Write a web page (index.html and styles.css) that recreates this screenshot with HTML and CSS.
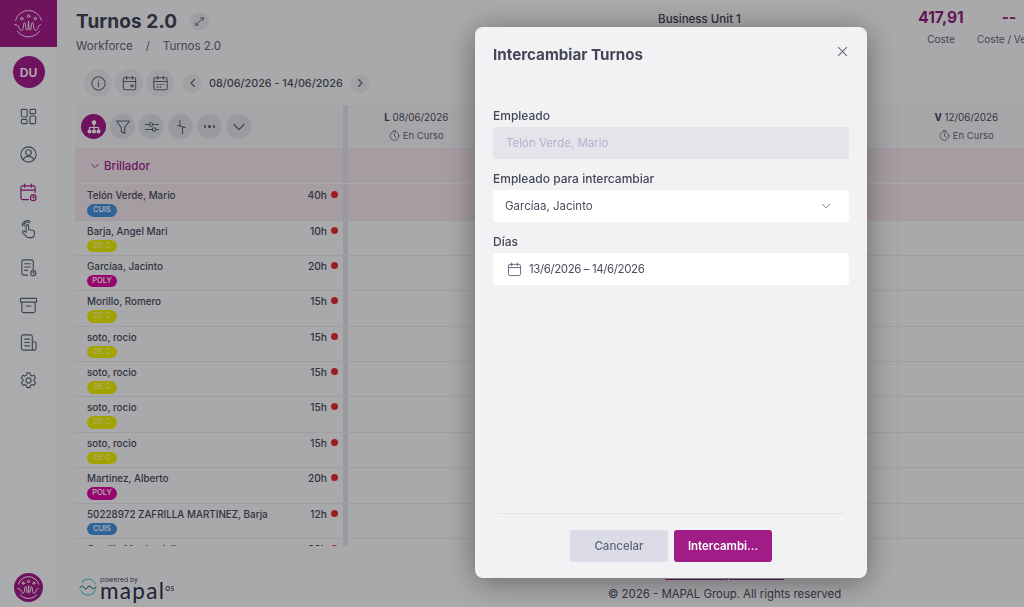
FILE: index.html
```html
<!DOCTYPE html>
<html lang="es">
<head>
<meta charset="utf-8">
<title>Turnos 2.0</title>
<link rel="stylesheet" href="styles.css">
</head>
<body>
<div class="app">
  <aside class="sidebar">
    <div class="brand">
      <svg class="brand-logo" viewBox="0 0 30 30"><path d="M1.600 11.500A14 14 0 0 1 28.400 11.500M3.500 23A14 14 0 0 0 26.500 23"/><path d="M.8 16c2.700 0 3.700 1.500 4.700 4 1 2.600 3 3 3.800.5.7-2.300.4-6.500 1.700-6.500 1.300 0 .8 8 2.500 8s1.200-9.500 1.500-9.500.2 9.500 1.500 9.500c1.700 0 1.200-8 2.500-8 1.300 0 1 4.200 1.700 6.500.8 2.500 2.800 2.100 3.800-.5 1-2.500 2-4 2.800-4"/><circle cx="15" cy="7.500" r="1.300"/><circle cx="8" cy="10" r="1.300"/><circle cx="22" cy="10" r="1.300"/></svg>
    </div>
    <div class="avatar">DU</div>
    <nav class="side-nav">
      <a class="side-item"><svg viewBox="0 0 20 20"><rect x="2.500" y="2.500" width="6" height="8" rx="1"/><rect x="11.500" y="2.500" width="6" height="4.500" rx="1"/><rect x="2.500" y="13" width="6" height="4.500" rx="1"/><rect x="11.500" y="9.500" width="6" height="8" rx="1"/></svg></a>
      <a class="side-item"><svg viewBox="0 0 20 20"><circle cx="10" cy="10" r="8"/><circle cx="10" cy="8" r="3"/><path d="M4.500 15.500c1-2.500 3-3.500 5.500-3.500s4.500 1 5.500 3.500"/></svg></a>
      <a class="side-item side-item-active"><svg viewBox="0 0 20 20"><path d="M10 17.500H4a2 2 0 0 1-2-2V5a2 2 0 0 1 2-2h11a2 2 0 0 1 2 2v5M2 7.500h15M6 1v3.500M13 1v3.500"/><circle cx="15" cy="15.500" r="3"/><path d="M15 14v1.500h1.200"/></svg></a>
      <a class="side-item"><svg viewBox="0 0 20 20"><path d="M7.500 12V6.200a1.300 1.300 0 0 1 2.600 0V10l4.700 1a2 2 0 0 1 1.500 2.200l-.4 3a2.500 2.500 0 0 1-2.500 2.300H10a3 3 0 0 1-2.400-1.200L4 13.500c-1-1.500.8-2.800 2-1.700l1.500 1.200M5.500 6.500a3.300 3.300 0 0 1 5.500-3.300M3.500 6a5.300 5.300 0 0 1 8.500-4.300"/></svg></a>
      <a class="side-item"><svg viewBox="0 0 20 20"><path d="M9 18H5a2 2 0 0 1-2-2V4a2 2 0 0 1 2-2h8a2 2 0 0 1 2 2v8M6 6h6M6 9.500h6M6 13h3"/><circle cx="15" cy="16" r="2.700"/><path d="M15 14.800V16h1"/></svg></a>
      <a class="side-item"><svg viewBox="0 0 20 20"><rect x="1.500" y="2.500" width="17" height="4" rx=".8"/><path d="M3 6.500v9a2 2 0 0 0 2 2h10a2 2 0 0 0 2-2v-9M7.500 10.500h5"/></svg></a>
      <a class="side-item"><svg viewBox="0 0 20 20"><path d="M14 9.500V4a2 2 0 0 0-2-2H4.500a2 2 0 0 0-2 2v12a2 2 0 0 0 2 2h11.500M6 6.500h5M6 10h5M6 13.500h5M14 9.500h2.500a1.500 1.500 0 0 1 1.500 1.500v5a2 2 0 0 1-4 0z"/></svg></a>
      <a class="side-item"><svg viewBox="0 0 20 20"><circle cx="10" cy="10" r="2.700"/><path d="M8.400 2h3.200l.5 2.300 1.600.9 2.200-.7 1.600 2.800-1.700 1.500v1.900l1.700 1.500-1.600 2.800-2.200-.7-1.600.9-.5 2.300H8.400l-.5-2.300-1.600-.9-2.200.7-1.600-2.800 1.700-1.500V8.800L2.500 7.300l1.600-2.800 2.200.7 1.600-.9z"/></svg></a>
    </nav>
    <div class="side-foot">
      <svg class="foot-logo" viewBox="0 0 30 30"><path d="M4.500 11.500A11 11 0 0 1 25.500 11.500M6.500 22.500A11 11 0 0 0 23.500 22.500"/><path d="M4 16c2 0 2.800 1.200 3.500 3 .8 2.200 2.500 2.500 3.100.4.500-1.800.3-5.400 1.400-5.400s.7 6.500 1.900 6.500 .8-7.500 1.100-7.500.1 7.500 1.100 7.500c1.300 0 .9-6.500 1.900-6.500s.9 3.600 1.400 5.400c.6 2.100 2.300 1.800 3.100-.4.700-1.800 1.500-3 2.500-3"/><circle cx="15" cy="8.800" r="1.100"/><circle cx="9.500" cy="10.500" r="1.100"/><circle cx="20.500" cy="10.500" r="1.100"/></svg>
    </div>
  </aside>

  <main class="main">
    <header class="page-head">
      <div class="page-title">
        <div class="title-row">
          <h1>Turnos 2.0</h1>
          <span class="expand"><svg viewBox="0 0 12 12"><path d="M2 10l8-8M7 2h3v3M2 7v3h3"/></svg></span>
        </div>
        <div class="crumbs"><span>Workforce</span><span class="crumb-sep">/</span><span>Turnos 2.0</span></div>
      </div>
      <div class="unit">Business Unit 1</div>
      <div class="kpi kpi-cost"><b>417,91</b><span>Coste</span></div>
      <div class="kpi kpi-ratio"><b>--</b><span>Coste / Venta</span></div>
    </header>

    <div class="toolbar">
      <span class="round round-lg"><svg viewBox="0 0 20 20"><circle cx="10" cy="10" r="7"/><path d="M10 9v4.500M10 6.300v.2"/></svg></span>
      <span class="round round-lg"><svg viewBox="0 0 20 20"><rect x="3.500" y="4" width="13" height="12.500" rx="1.500"/><path d="M3.500 7.800h13M7 2.500v3M13 2.500v3"/><rect x="11.500" y="11.500" width="2.500" height="2"/></svg></span>
      <span class="round round-lg"><svg viewBox="0 0 20 20"><rect x="3" y="4" width="14" height="12.500" rx="1.500"/><path d="M3 7.800h14M7 2.500v3M13 2.500v3M6.500 11h1M9.500 11h1M12.500 11h1M6.500 13.800h1M9.500 13.800h1"/></svg></span>
      <span class="round round-sm"><svg viewBox="0 0 12 12"><path d="M7.500 2.500L4 6l3.500 3.500"/></svg></span>
      <span class="range">08/06/2026 - 14/06/2026</span>
      <span class="round round-sm"><svg viewBox="0 0 12 12"><path d="M4.500 2.500L8 6 4.500 9.500"/></svg></span>
    </div>

    <section class="table">
      <div class="row row-head">
        <div class="cell-name head-actions">
          <span class="tool tool-on"><svg viewBox="0 0 16 16"><circle class="solid" cx="8" cy="3.500" r="1.700"/><path d="M8 5v3M3.500 11V8.500h9V11M8 8v3"/><circle class="solid" cx="3.500" cy="12.500" r="1.500"/><circle class="solid" cx="8" cy="12.500" r="1.500"/><circle class="solid" cx="12.500" cy="12.500" r="1.500"/></svg></span>
          <span class="tool"><svg viewBox="0 0 16 16"><path d="M1.500 2h13L9.700 8.500v6l-3.400-2V8.500z"/></svg></span>
          <span class="tool"><svg viewBox="0 0 16 16"><path d="M1.500 5.500h3.500M9 5.500h5.500M1.500 10.500h6.500M11.500 10.500h3"/><circle cx="7" cy="5.500" r="1.700"/><circle cx="10" cy="10.500" r="1.700"/></svg></span>
          <span class="tool"><svg viewBox="0 0 16 16"><path d="M7 1.500V7L4.500 6.500M7 7l5.500 1.500M9.500 8v6.500"/></svg></span>
          <span class="tool tool-dots"><i></i><i></i><i></i></span>
          <span class="tool"><svg viewBox="0 0 16 16"><path d="M3 5.500l5 5 5-5"/></svg></span>
        </div>
        <div class="day"><div class="day-date"><b>L</b> 08/06/2026</div><div class="day-state"><svg viewBox="0 0 12 12"><circle cx="6" cy="6.500" r="4.700"/><path d="M6 4v2.700l1.800 1M4.500 .8h3"/></svg>En Curso</div></div>
        <div class="day"><div class="day-date"><b>M</b> 09/06/2026</div></div>
        <div class="day"><div class="day-date"><b>X</b> 10/06/2026</div></div>
        <div class="day"><div class="day-date"><b>J</b> 11/06/2026</div></div>
        <div class="day"><div class="day-date"><b>V</b> 12/06/2026</div><div class="day-state"><svg viewBox="0 0 12 12"><circle cx="6" cy="6.500" r="4.700"/><path d="M6 4v2.700l1.800 1M4.500 .8h3"/></svg>En Curso</div></div>
      </div>

      <div class="row row-group">
        <div class="cell-name group-name"><svg viewBox="0 0 12 12"><path d="M2 4l4 4 4-4"/></svg>Brillador</div>
        <div class="day"></div><div class="day"></div><div class="day"></div><div class="day"></div><div class="day"></div>
      </div>

      <div class="row row-emp row-selected"><div class="cell-name"><div class="emp"><span class="emp-name">Telón Verde, Mario</span><span class="badge badge-cuis">CUIS</span></div><span class="hours">40h</span><i class="dot"></i></div><div class="day"></div><div class="day"></div><div class="day"></div><div class="day"></div><div class="day"></div></div>
      <div class="row row-emp"><div class="cell-name"><div class="emp"><span class="emp-name">Barja, Angel Mari</span><span class="badge badge-dec">DE C</span></div><span class="hours">10h</span><i class="dot"></i></div><div class="day"></div><div class="day"></div><div class="day"></div><div class="day"></div><div class="day"></div></div>
      <div class="row row-emp"><div class="cell-name"><div class="emp"><span class="emp-name">Garcíaa, Jacinto</span><span class="badge badge-poly">POLY</span></div><span class="hours">20h</span><i class="dot"></i></div><div class="day"></div><div class="day"></div><div class="day"></div><div class="day"></div><div class="day"></div></div>
      <div class="row row-emp"><div class="cell-name"><div class="emp"><span class="emp-name">Morillo, Romero</span><span class="badge badge-dec">DE C</span></div><span class="hours">15h</span><i class="dot"></i></div><div class="day"></div><div class="day"></div><div class="day"></div><div class="day"></div><div class="day"></div></div>
      <div class="row row-emp"><div class="cell-name"><div class="emp"><span class="emp-name">soto, rocio</span><span class="badge badge-dec">DE C</span></div><span class="hours">15h</span><i class="dot"></i></div><div class="day"></div><div class="day"></div><div class="day"></div><div class="day"></div><div class="day"></div></div>
      <div class="row row-emp"><div class="cell-name"><div class="emp"><span class="emp-name">soto, rocio</span><span class="badge badge-dec">DE C</span></div><span class="hours">15h</span><i class="dot"></i></div><div class="day"></div><div class="day"></div><div class="day"></div><div class="day"></div><div class="day"></div></div>
      <div class="row row-emp"><div class="cell-name"><div class="emp"><span class="emp-name">soto, rocio</span><span class="badge badge-dec">DE C</span></div><span class="hours">15h</span><i class="dot"></i></div><div class="day"></div><div class="day"></div><div class="day"></div><div class="day"></div><div class="day"></div></div>
      <div class="row row-emp"><div class="cell-name"><div class="emp"><span class="emp-name">soto, rocio</span><span class="badge badge-dec">DE C</span></div><span class="hours">15h</span><i class="dot"></i></div><div class="day"></div><div class="day"></div><div class="day"></div><div class="day"></div><div class="day"></div></div>
      <div class="row row-emp"><div class="cell-name"><div class="emp"><span class="emp-name">Martinez, Alberto</span><span class="badge badge-poly">POLY</span></div><span class="hours">20h</span><i class="dot"></i></div><div class="day"></div><div class="day"></div><div class="day"></div><div class="day"></div><div class="day"></div></div>
      <div class="row row-emp"><div class="cell-name"><div class="emp"><span class="emp-name">50228972 ZAFRILLA MARTINEZ, Barja</span><span class="badge badge-cuis">CUIS</span></div><span class="hours">12h</span><i class="dot"></i></div><div class="day"></div><div class="day"></div><div class="day"></div><div class="day"></div><div class="day"></div></div>
      <div class="row row-emp"><div class="cell-name"><div class="emp"><span class="emp-name">Carrillo Martin, Julio</span></div><span class="hours">20h</span><i class="dot"></i></div><div class="day"></div><div class="day"></div><div class="day"></div><div class="day"></div><div class="day"></div></div>
    </section>

    <footer class="page-foot">
      <div class="powered">
        <svg class="mapal-mark" viewBox="0 0 18 18"><path d="M3 4A7.800 7.800 0 0 1 16.300 6M1.700 12A7.800 7.800 0 0 0 16.300 12"/><path class="mapal-wave" d="M1 9.500c1.500-2 2.500-2 4 0s2.500 1.500 3.500 0 2.500-2 4 0 2.500 1.500 4.500-.5"/></svg>
        <div class="powered-text"><small>powered by</small><strong>mapal<sup>os</sup></strong></div>
      </div>
      <div class="legal">
        <a class="legal-link">Política de privacidad</a>
        <span>© 2026 - MAPAL Group. All rights reserved</span>
      </div>
    </footer>
  </main>
</div>

<div class="overlay"></div>

<div class="dialog">
  <div class="dialog-head">
    <h2>Intercambiar Turnos</h2>
    <svg class="close" viewBox="0 0 12 12"><path d="M1.500 1.500l9 9M10.500 1.500l-9 9"/></svg>
  </div>
  <form class="dialog-body">
    <label class="field-label">Empleado</label>
    <div class="input input-disabled">Telón Verde, Mario</div>
    <label class="field-label">Empleado para intercambiar</label>
    <div class="input input-select">Garcíaa, Jacinto<svg viewBox="0 0 12 12"><path d="M1.500 3.800L6 8.300l4.500-4.500"/></svg></div>
    <label class="field-label">Días</label>
    <div class="input input-date"><svg viewBox="0 0 16 16"><rect x="1.500" y="2.500" width="13" height="12" rx="2"/><path d="M1.500 6h13M5 1v3M11 1v3"/></svg>13/6/2026 – 14/6/2026</div>
  </form>
  <div class="dialog-foot">
    <button class="btn btn-cancel" type="button">Cancelar</button>
    <button class="btn btn-primary" type="button">Intercambi...</button>
  </div>
</div>
</body>
</html>
```
FILE: styles.css
```css
* { box-sizing: border-box; }
html, body { margin: 0; height: 100%; overflow: hidden; }
body { font-family: Inter, "Liberation Sans", sans-serif; color: #4a4e60; background: #f2f2f5; }
svg { display: block; fill: none; stroke: currentColor; stroke-linecap: round; stroke-linejoin: round; }
h1, h2 { margin: 0; }

.app { display: flex; width: 1024px; height: 607px; }

/* sidebar */
.sidebar { flex: 0 0 57px; display: flex; flex-direction: column; align-items: center; background: #f4f5f7; }
.brand { align-self: stretch; height: 47px; background: #a01c87; display: flex; align-items: center; justify-content: center; }
.brand-logo { width: 29px; height: 29px; color: #fff; stroke-width: .9; }
.avatar { width: 32px; height: 32px; margin-top: 9px; border-radius: 50%; background: #a01c87; color: #fff; font-size: 12px; font-weight: 600; display: flex; align-items: center; justify-content: center; }
.side-nav { display: flex; flex-direction: column; margin-top: 10px; }
.side-item { height: 37.700px; display: flex; align-items: center; justify-content: center; color: #5d6478; }
.side-item svg { width: 19px; height: 19px; stroke-width: 1.200; }
.side-item-active { color: #a01c87; }
.side-foot { margin-top: auto; padding-bottom: 5px; }
.foot-logo { width: 29px; height: 29px; border-radius: 50%; background: #a01c87; color: #fff; stroke-width: 1; }

/* main */
.main { flex: 1; min-width: 0; display: flex; flex-direction: column; padding-left: 18px; }
.page-head { height: 63px; display: flex; align-items: flex-start; }
.page-title { flex: 0 0 566px; padding: 10px 0 0 1px; }
.title-row { display: flex; align-items: center; gap: 13px; height: 23px; }
h1 { font-size: 19px; font-weight: 700; color: #3f4452; letter-spacing: .1px; }
.expand { width: 19px; height: 19px; border-radius: 50%; background: #e3e4e8; color: #5d6478; display: flex; align-items: center; justify-content: center; }
.expand svg { width: 11px; height: 11px; stroke-width: 1; }
.crumbs { margin-top: 6px; display: flex; gap: 13px; font-size: 11.500px; color: #5d6478; }
.unit { flex: 0 0 117px; padding-top: 12px; font-size: 11.500px; font-weight: 500; color: #3f4452; text-align: center; white-space: nowrap; }
.kpi { display: flex; flex-direction: column; align-items: center; white-space: nowrap; }
.kpi b { margin-top: 8px; font-size: 15.500px; font-weight: 700; color: #8c1f79; }
.kpi span { margin-top: 6px; font-size: 10px; color: #5d6478; }
.kpi-cost { flex: 0 0 70px; margin-left: 148px; }
.kpi-ratio { flex: 0 0 66px; }

.toolbar { height: 42px; display: flex; align-items: center; padding: 0 0 2px 9px; gap: 3px; }
.round { border-radius: 50%; background: #e6e7ea; color: #5d6478; display: flex; align-items: center; justify-content: center; }
.round-lg { width: 28px; height: 28px; }
.round-lg svg { width: 19px; height: 19px; stroke-width: 1.100; }
.round-sm { width: 19px; height: 19px; }
.round-sm svg { width: 12px; height: 12px; stroke-width: 1.100; }
.toolbar .round-sm:nth-of-type(4) { margin-left: 6px; }
.range { margin: 0 5px 0 4px; font-size: 10.800px; font-weight: 500; color: #4a4e60; white-space: nowrap; }

/* table */
.table { height: 441px; overflow: hidden; background: #f2f2f5; }
.row { display: flex; width: 960px; }
.cell-name { flex: 0 0 273px; border-right: 5px solid #dcdde6; display: flex; }
.day { flex: 0 0 137.500px; border-right: 1px solid #e3e4ea; text-align: center; }
.row-head { height: 44px; background: #eeeef2; border-bottom: 1px solid #dfe0e8; }
.head-actions { padding: 9px 0 0 6px; gap: 4px; }
.tool { width: 25px; height: 25px; border-radius: 50%; background: #dcdde6; color: #5d6478; display: flex; align-items: center; justify-content: center; }
.tool svg { width: 16px; height: 16px; stroke-width: 1.100; }
.tool-on { background: #a01c87; color: #fff; }
.solid { fill: currentColor; }
.tool-dots { gap: 2px; }
.tool-dots i { width: 2.500px; height: 2.500px; border-radius: 50%; background: #5d6478; }
.day-date { margin-top: 6.500px; font-size: 9.800px; line-height: 12px; color: #4a4e60; }
.day-date b { font-weight: 700; color: #3f4452; }
.day-state { margin-top: 6px; font-size: 9.500px; line-height: 12px; color: #5d6478; display: flex; justify-content: center; align-items: center; gap: 3px; }
.day-state svg { width: 11px; height: 11px; stroke-width: .9; }
.row-group { height: 35px; background: #eee1ea; border-bottom: 1px solid #f6edf3; }
.row-group .day { border-right-color: #e3d6e0; }
.group-name { align-items: center; padding-left: 15px; gap: 4px; font-size: 11.500px; font-weight: 500; color: #a01c87; }
.group-name svg { width: 10px; height: 10px; stroke-width: 1.100; }
.row-emp { height: 35.400px; background: #f2f2f5; border-bottom: 1px solid #e2e3e8; }
.row-emp .cell-name { align-items: flex-start; padding: 4px 5px 0 12px; }
.row-selected { height: 36.500px; background: #eee1ea; }
.row-selected .cell-name { padding-top: 5px; }
.row-selected .day { border-right-color: #e3d6e0; }
.emp { flex: 1; min-width: 0; display: flex; flex-direction: column; align-items: flex-start; }
.emp-name { font-size: 9.850px; font-weight: 500; line-height: 12px; color: #474b5c; white-space: nowrap; }
.badge { margin-top: 3px; width: 30px; height: 12.500px; border-radius: 7px; color: #fff; font-size: 7.500px; font-weight: 500; line-height: 12.500px; text-align: center; }
.badge-cuis { background: #428fd8; }
.badge-dec { background: #eaea00; color: #f8f8a0; }
.badge-poly { background: #d9099f; }
.hours { font-size: 10.200px; font-weight: 500; line-height: 12px; color: #474b5c; }
.dot { flex: 0 0 7px; height: 7px; margin: 2px 0 0 4px; border-radius: 50%; background: #e02a33; }

/* footer */
.page-foot { flex: 1; display: flex; background: #f2f2f5; }
.powered { flex: 0 0 533px; display: flex; align-items: center; padding: 20px 0 0 4px; gap: 3px; }
.mapal-mark { width: 18px; height: 18px; color: #6fc9d3; stroke-width: 1.200; }
.mapal-wave { stroke: #3f7f8c; }
.powered-text { display: flex; flex-direction: column; }
.powered-text small { font-size: 6.800px; line-height: 7px; color: #4a4e60; }
.powered-text strong { font-family: Lato, sans-serif; font-size: 22.500px; line-height: 15px; font-weight: 400; color: #2d2f4a; letter-spacing: 1.300px; }
.powered-text sup { font-size: 8.500px; line-height: 0; vertical-align: 8px; margin-left: 0; letter-spacing: .3px; }
.legal { display: flex; flex-direction: column; align-items: center; padding-top: 21px; font-size: 11.400px; color: #4a4e60; white-space: nowrap; }
.legal-link { color: #a01c87; text-decoration: underline; font-size: 11.700px; line-height: 14px; }
.legal span { margin-top: 6px; }

/* modal */
.overlay { position: fixed; inset: 0; background: rgba(0, 0, 0, .3); }
.dialog { position: fixed; left: 475px; top: 27px; width: 392px; height: 551px; border-radius: 8px; background: #f2f2f5; box-shadow: 0 4px 30px rgba(0, 0, 0, .4); display: flex; flex-direction: column; padding: 0 18px; }
.dialog-head { height: 80px; display: flex; justify-content: space-between; padding-top: 19px; }
h2 { font-size: 15.200px; line-height: 17px; font-weight: 700; color: #434758; }
.close { width: 11px; height: 11px; margin-right: 1px; color: #5d6478; stroke-width: 1.100; }
.dialog-body { flex: 1; display: flex; flex-direction: column; }
.field-label { display: block; height: 20px; font-size: 12px; line-height: 18px; font-weight: 500; color: #434758; }
.input { height: 32px; margin-bottom: 11px; border-radius: 3px; background: #fff; display: flex; align-items: center; padding: 0 12px; font-size: 11.500px; color: #4a4e60; }
.input-disabled { background: #e4e4ea; color: #b0b3cd; padding-left: 13px; }
.input-select { justify-content: space-between; }
.input-select svg { width: 10px; height: 10px; margin-right: 6px; stroke-width: 1; color: #5d6478; }
.input-date { padding-left: 14px; gap: 7px; letter-spacing: -.4px; }
.input-date svg { width: 15px; height: 15px; stroke-width: 1; color: #5d6478; }
.dialog-foot { margin: 0 5px 0 5px; height: 65px; border-top: 1px solid #e3e4ea; display: flex; justify-content: center; gap: 6px; padding-top: 16px; }
.btn { width: 98px; height: 32px; border: 0; border-radius: 3px; font-family: inherit; font-size: 11.500px; font-weight: 500; }
.btn-cancel { background: #dcdce8; color: #5d6478; }
.btn-primary { background: #a01c87; color: #fff; font-weight: 600; }
```
